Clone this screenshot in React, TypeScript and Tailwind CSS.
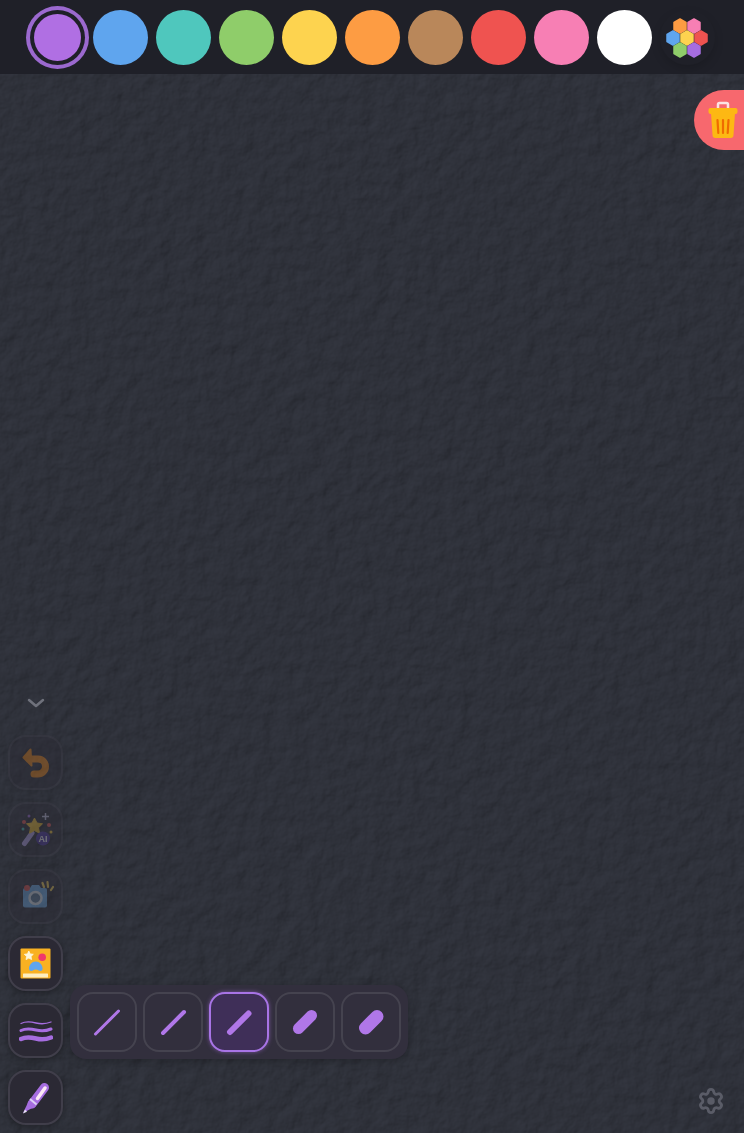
const swatches = ["#5fa5ee", "#4fc7bd", "#8fcd6a", "#fdd34f", "#fd9c43", "#b9875a", "#ef5350", "#f77fb4", "#ffffff"];

const widths = [
  { from: [18.5, 42], to: [41.5, 19], stroke: 3 },
  { from: [20, 41], to: [41, 20], stroke: 4 },
  { from: [21, 40], to: [39.5, 21.5], stroke: 6 },
  { from: [23.5, 36.5], to: [36.5, 23.5], stroke: 11 },
  { from: [24.5, 36], to: [36, 24.5], stroke: 13 },
];

const hexes = [
  { x: 14, y: 9, fill: "#fd9c43" },
  { x: 28, y: 9, fill: "#f77fb4" },
  { x: 7, y: 21, fill: "#5fa5ee" },
  { x: 21, y: 21, fill: "#fdd34f" },
  { x: 35, y: 21, fill: "#ef5350" },
  { x: 14, y: 33, fill: "#8fcd6a" },
  { x: 28, y: 33, fill: "#a66de0" },
];

const ToolButton = ({ dim, children }: { dim?: boolean; children: React.ReactNode }) => (
  <button className={`flex size-[55px] items-center justify-center rounded-[18px] border-2 border-[#403e4a] bg-[#2b2934] shadow-[0_2px_6px_rgba(0,0,0,0.3)] ${dim ? "opacity-30" : ""}`}>
    {children}
  </button>
);

const Trash = () => (
  <svg width="32" height="38" viewBox="0 0 32 38" fill="none">
    <path d="M10 7V3.500A1.500 1.500 0 0 1 11.500 2h7A1.500 1.500 0 0 1 20 3.500V7" stroke="#fbe3e3" strokeWidth="2.500" />
    <path d="M3 12h24l-1.500 22a3 3 0 0 1-3 3H7.500a3 3 0 0 1-3-3z" fill="#fdb813" />
    <rect x="0.500" y="7" width="29" height="6" rx="2" fill="#fdb813" />
    <path d="M9.500 19l.800 13M15 19v13M20.500 19l-.800 13" stroke="#ef6c00" strokeWidth="2.200" strokeLinecap="round" />
  </svg>
);

const UndoIcon = () => (
  <svg width="34" height="34" viewBox="0 0 34 34" fill="none">
    <path d="M4.500 11.500L11.500 3.500l1 16z" fill="#ff8a0f" strokeLinejoin="round" stroke="#ff8a0f" strokeWidth="2" />
    <path d="M11 13h8a7.500 7.500 0 0 1 0 15h-4" stroke="#ff8a0f" strokeWidth="7" strokeLinecap="round" />
  </svg>
);

const WandIcon = () => (
  <svg width="36" height="36" viewBox="0 0 36 36" fill="none">
    <path d="M6.500 31.500L14 21" stroke="#b9a4ee" strokeWidth="5" strokeLinecap="round" />
    <path d="M16.500 6l2.500 5 5.500.800-4 3.900 1 5.500-5-2.600-5 2.600 1-5.500-4-3.900 5.500-.800z" fill="#fdc52d" strokeLinejoin="round" stroke="#fdc52d" />
    <path d="M27.500 1v7M24 4.500h7" stroke="#c9c5e5" strokeWidth="1.500" />
    <circle cx="6" cy="10" r="2" fill="#ef5350" />
    <circle cx="5" cy="17" r="1.500" fill="#4fc7bd" />
    <circle cx="11" cy="4" r="1.500" fill="#a66de0" />
    <circle cx="31" cy="13" r="2" fill="#ef5350" />
    <circle cx="33" cy="20" r="1.500" fill="#fdc52d" />
    <circle cx="25" cy="26.500" r="7" fill="#4a2fa0" />
    <text x="25" y="29.800" textAnchor="middle" fontSize="9" fontWeight="700" fontFamily="Liberation Sans, sans-serif" fill="#ffffff">AI</text>
  </svg>
);

const CameraIcon = () => (
  <svg width="36" height="36" viewBox="0 0 36 36" fill="none">
    <rect x="5" y="9" width="24" height="19.500" rx="2" fill="#6fb1f2" />
    <path d="M12 9l2-3h7l2 3z" fill="#6fb1f2" />
    <circle cx="9" cy="9" r="3" fill="#ef5350" />
    <circle cx="17.500" cy="19" r="6" stroke="#e5ecf5" strokeWidth="2.500" fill="#56718f" />
    <path d="M26 8l-1.500-4M30 8l-.500-5M33 11l2-3" stroke="#fdd34f" strokeWidth="2.200" strokeLinecap="round" />
  </svg>
);

const PictureIcon = () => (
  <svg width="32" height="32" viewBox="0 0 32 32" fill="none">
    <rect x="0.500" y="0.500" width="30" height="30" rx="1" fill="#f9b122" />
    <rect x="3" y="25.500" width="25" height="4" rx="0.500" fill="#fdeec0" />
    <path d="M8.800 3l1.400 2.900 3.100.400-2.300 2.200.600 3.100-2.800-1.500-2.800 1.500.600-3.100-2.300-2.200 3.100-.400z" fill="#fdf6dc" strokeLinejoin="round" stroke="#fdf6dc" strokeWidth="0.800" />
    <circle cx="22.200" cy="9.200" r="3.800" fill="#f0386b" />
    <path d="M9 20.500c0-3.500 3-7 6.800-7s6.800 3.500 6.800 7c0 2.500-2.300 3-3.800 2-1-.700-2-1-3-1s-2 .300-3 1c-1.500 1-3.800.500-3.800-2z" fill="#5fa5ee" />
  </svg>
);

const WavesIcon = () => (
  <svg width="34" height="30" viewBox="0 0 34 30" fill="none" stroke="#a66de0" strokeLinecap="round">
    <path d="M2 7.500c5-2.500 9-2 15-.500s10 1 15-1" strokeWidth="1.300" />
    <path d="M2 14.500c5-2.500 9-2 15-.500s10 1 15-1" strokeWidth="3" />
    <path d="M2 23c5-2.500 9-2 15-.500s10 1 15-1" strokeWidth="4.500" />
  </svg>
);

const PenIcon = () => (
  <svg width="30" height="34" viewBox="0 0 30 34" fill="none">
    <path d="M23.500 6.500L11 23" stroke="#a66de0" strokeWidth="9" strokeLinecap="round" />
    <path d="M8 19.500L2 32l13-7z" fill="#a66de0" />
    <path d="M9 18l6.500 5.500" stroke="#dcd0f5" strokeWidth="2" />
    <path d="M4 28.500L2 32.500l4-1.800z" fill="#e8e4f5" />
    <path d="M24 7L16.500 17.500" stroke="#fbe8f5" strokeWidth="3.500" strokeLinecap="round" />
  </svg>
);

export default function App() {
  return (
    <div className="relative flex h-[1133px] w-[744px] flex-col overflow-hidden bg-[#2e303a]">
      {/* paper grain behind everything */}
      <svg className="absolute inset-0 h-full w-full" aria-hidden="true">
        <filter id="paper" x="0" y="0" width="100%" height="100%" colorInterpolationFilters="sRGB">
          <feTurbulence type="fractalNoise" baseFrequency="0.06" numOctaves="5" seed="4" result="noise" />
          <feDiffuseLighting in="noise" lightingColor="#353842" surfaceScale="1.300" diffuseConstant="1">
            <feDistantLight azimuth="45" elevation="62" />
          </feDiffuseLighting>
        </filter>
        <rect width="100%" height="100%" filter="url(#paper)" />
      </svg>

      <header className="relative flex h-[74px] shrink-0 items-start gap-2 bg-[#1f2028] pl-[30px] pt-[10px]">
        <div className="flex size-[55px] items-center justify-center">
          <div className="size-[47px] rounded-full bg-[#b06fe3] shadow-[0_0_0_4px_#1f2028,0_0_0_8px_#9b69cf]" />
        </div>
        {swatches.map((color) => (
          <div key={color} className="size-[55px] rounded-full" style={{ backgroundColor: color }} />
        ))}
        <button className="flex size-[55px] items-center justify-center rounded-full shadow-[0_4px_10px_rgba(0,0,0,0.15)]">
          <svg width="44" height="42" viewBox="0 0 44 42">
            {hexes.map((h) => (
              <path
                key={h.fill}
                d={`M${h.x} ${h.y - 7}l6 3.500v7l-6 3.500-6-3.500v-7z`}
                fill={h.fill}
                stroke={h.fill}
                strokeWidth="1.500"
                strokeLinejoin="round"
              />
            ))}
          </svg>
        </button>
      </header>

      <main className="relative flex flex-1 flex-col justify-between pb-2 pl-2">
        <button className="mt-4 flex h-[60px] w-[50px] items-center self-end rounded-l-[30px] bg-[#f7686e] pl-[14px]">
          <Trash />
        </button>

        <div className="flex flex-col items-start">
          <svg className="mb-[27px] ml-[19px] opacity-70" width="18" height="10" viewBox="0 0 18 10" fill="none">
            <path d="M2 2l7 6 7-6" stroke="#8a8c97" strokeWidth="2.500" strokeLinecap="round" strokeLinejoin="round" />
          </svg>
          <div className="flex w-full items-end justify-between">
            <div className="flex items-end">
              <div className="flex flex-col gap-3">
                <ToolButton dim><UndoIcon /></ToolButton>
                <ToolButton dim><WandIcon /></ToolButton>
                <ToolButton dim><CameraIcon /></ToolButton>
                <ToolButton><PictureIcon /></ToolButton>
                <ToolButton><WavesIcon /></ToolButton>
                <ToolButton><PenIcon /></ToolButton>
              </div>
              <div className="mb-[66px] ml-[7px] flex gap-1.5 rounded-2xl bg-[#322f3d] p-[7px] shadow-[0_2px_8px_rgba(0,0,0,0.25)]">
                {widths.map((w, i) => (
                  <button
                    key={i}
                    className={
                      i === 2
                        ? "size-[60px] rounded-[16px] border-2 border-[#a874e6] bg-[#3f2f58] shadow-[0_0_4px_rgba(166,109,224,0.6)]"
                        : "size-[60px] rounded-[16px] border-2 border-[#45434f]"
                    }
                  >
                    <svg className="-m-0.5" width="60" height="60" viewBox="0 0 60 60">
                      <line x1={w.from[0]} y1={w.from[1]} x2={w.to[0]} y2={w.to[1]} stroke="#b077e8" strokeWidth={w.stroke} strokeLinecap="round" />
                    </svg>
                  </button>
                ))}
              </div>
            </div>
            <svg className="mb-[10px] mr-[19px]" width="28" height="28" viewBox="0 0 24 24" fill="none" stroke="#5a5c67" strokeWidth="2.400">
              <path d="M9.671 4.136a2.34 2.34 0 0 1 4.659 0 2.34 2.34 0 0 0 3.319 1.915 2.34 2.34 0 0 1 2.33 4.033 2.34 2.34 0 0 0 0 3.831 2.34 2.34 0 0 1-2.33 4.033 2.34 2.34 0 0 0-3.319 1.915 2.34 2.34 0 0 1-4.659 0 2.34 2.34 0 0 0-3.32-1.915 2.34 2.34 0 0 1-2.33-4.033 2.34 2.34 0 0 0 0-3.831A2.34 2.34 0 0 1 6.35 6.051a2.34 2.34 0 0 0 3.32-1.915" />
              <circle cx="12" cy="12" r="3.200" fill="#5a5c67" stroke="none" />
            </svg>
          </div>
        </div>
      </main>
    </div>
  );
}
